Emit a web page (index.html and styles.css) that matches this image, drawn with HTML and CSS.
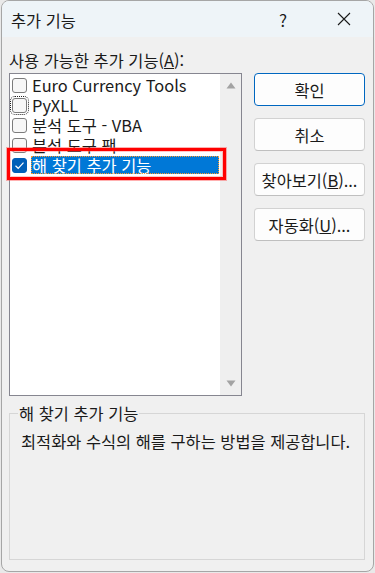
FILE: index.html
```html
<!DOCTYPE html>
<html lang="ko">
<head>
<meta charset="utf-8">
<title>추가 기능</title>
<link rel="stylesheet" href="styles.css">
</head>
<body>
<div class="dialog">
  <div class="titlebar">
    <span class="title">추가 기능</span>
    <span class="help">?</span>
    <span class="close">
      <svg width="14" height="14" viewBox="0 0 14 14"><path d="M1 1 L13 13 M13 1 L1 13" stroke="#1a1a1a" stroke-width="1.1" fill="none"/></svg>
    </span>
  </div>
  <div class="content">
    <div class="main">
      <div class="label">사용 가능한 추가 기능(<u>A</u>):</div>
      <div class="listbox">
        <div class="items">
          <div class="item"><span class="cb"></span><span class="txt">Euro Currency Tools</span></div>
          <div class="item"><span class="cb focus"></span><span class="txt">PyXLL</span></div>
          <div class="item"><span class="cb"></span><span class="txt">분석 도구 - VBA</span></div>
          <div class="item"><span class="cb"></span><span class="txt">분석 도구 팩</span></div>
          <div class="item selected"><span class="cb checked"><svg width="11" height="9" viewBox="0 0 11 9"><path d="M1.5 4.8 L4.2 7.3 L9.5 1.6" stroke="#fff" stroke-width="1.2" fill="none"/></svg></span><span class="txt">해 찾기 추가 기능</span></div>
        </div>
        <div class="scrollbar">
          <svg class="arrow" width="10" height="7" viewBox="0 0 10 7"><path d="M5 0.5 L9.5 6.5 L0.5 6.5 Z" fill="#a3a3a3"/></svg>
          <svg class="arrow" width="10" height="7" viewBox="0 0 10 7"><path d="M0.5 0.5 L9.5 0.5 L5 6.5 Z" fill="#a3a3a3"/></svg>
        </div>
        <div class="highlight"></div>
      </div>
      <div class="buttons">
        <button class="btn default">확인</button>
        <button class="btn">취소</button>
        <button class="btn">찾아보기(<u>B</u>)...</button>
        <button class="btn">자동화(<u>U</u>)...</button>
      </div>
    </div>
    <fieldset class="group">
      <legend>해 찾기 추가 기능</legend>
      <p class="desc">최적화와 수식의 해를 구하는 방법을 제공합니다.</p>
    </fieldset>
  </div>
</div>
</body>
</html>
```

FILE: styles.css
```css
* { box-sizing: border-box; }
html, body {
  margin: 0;
  padding: 0;
  background: #e9e9e9;
  font-family: "Noto Sans CJK KR", "Noto Sans", sans-serif;
  font-size: 16.4px;
  color: #1a1a1a;
}
.dialog {
  margin-left: 1px;
  width: 373px;
  height: 572px;
  border: 1px solid #a6a6a6;
  border-radius: 8px;
  background: #f0f0f0;
  overflow: hidden;
  display: flex;
  flex-direction: column;
}
.titlebar {
  height: 36px;
  background: #eef4f8;
  display: flex;
  align-items: center;
  padding-left: 9px;
  flex-shrink: 0;
}
.title {
  flex: 1;
  line-height: 20px;
  padding-top: 1px;
}
.help {
  width: 20px;
  margin-right: 44px;
  text-align: center;
  font-size: 17px;
}
.close {
  width: 14px;
  height: 14px;
  margin-right: 22px;
  display: flex;
}
.content {
  padding: 13px 8px 0 7px;
  flex: 1;
  display: flex;
  flex-direction: column;
}
.main {
  display: grid;
  grid-template-columns: 233px 111px;
  grid-template-rows: 20px 323px;
  column-gap: 12px;
  row-gap: 3px;
}
.label {
  grid-column: 1;
  grid-row: 1;
  line-height: 20px;
}
.listbox {
  grid-column: 1;
  grid-row: 2;
  position: relative;
  border: 1px solid #868690;
  background: #ffffff;
  display: flex;
}
.items {
  flex: 1;
  padding-top: 1px;
  padding-left: 2px;
}
.item {
  height: 20px;
  display: flex;
  align-items: center;
  line-height: 18px;
}
.cb {
  width: 15px;
  height: 15px;
  border: 1px solid #7c7c7c;
  border-radius: 3px;
  background: #f7f7f7;
  margin-right: 4px;
  flex-shrink: 0;
  display: flex;
  align-items: center;
  justify-content: center;
}
.cb.focus {
  outline: 1px dotted #222;
  outline-offset: 1px;
}
.cb.checked {
  background: #005fb8;
  border-color: #005fb8;
}
.txt {
  white-space: nowrap;
  padding: 0 1px;
}
.item.selected .txt {
  flex: 1;
  background: #0078d7;
  color: #ffffff;
  height: 18px;
  outline: 1px dotted #ff9a2e;
  outline-offset: -1px;
  margin-right: 1px;
}
.scrollbar {
  width: 21px;
  background: #efefef;
  display: flex;
  flex-direction: column;
  justify-content: space-between;
  align-items: center;
  padding: 8px 0 8px;
}
.highlight {
  position: absolute;
  left: -3px;
  top: 74px;
  width: 219px;
  height: 32px;
  border: 3px solid #ff0000;
  box-shadow: 0 0 0 1px rgba(255, 80, 80, 0.45), inset 0 0 0 1px rgba(255, 120, 120, 0.4);
}
.buttons {
  grid-column: 2;
  grid-row: 2;
  display: flex;
  flex-direction: column;
  gap: 12px;
}
.btn {
  height: 33px;
  width: 111px;
  border: 1px solid #d2d2d2;
  border-bottom-color: #bfbfbf;
  border-radius: 4px;
  background: #fdfdfd;
  font-family: inherit;
  font-size: inherit;
  color: #1a1a1a;
  padding: 0;
}
.btn.default {
  border: 1px solid #0067c0;
  box-shadow: inset 0 0 0 1px #ffffff;
}
.group {
  margin: 7px 0 0 0;
  padding: 0 10px 0 11px;
  border: 1px solid #d6d6d6;
  height: 157px;
}
.group legend {
  padding: 0 1px;
  margin-left: -3px;
  line-height: 20px;
}
.desc {
  margin: 8px 0 0 0;
  line-height: 20px;
  white-space: nowrap;
}
```
